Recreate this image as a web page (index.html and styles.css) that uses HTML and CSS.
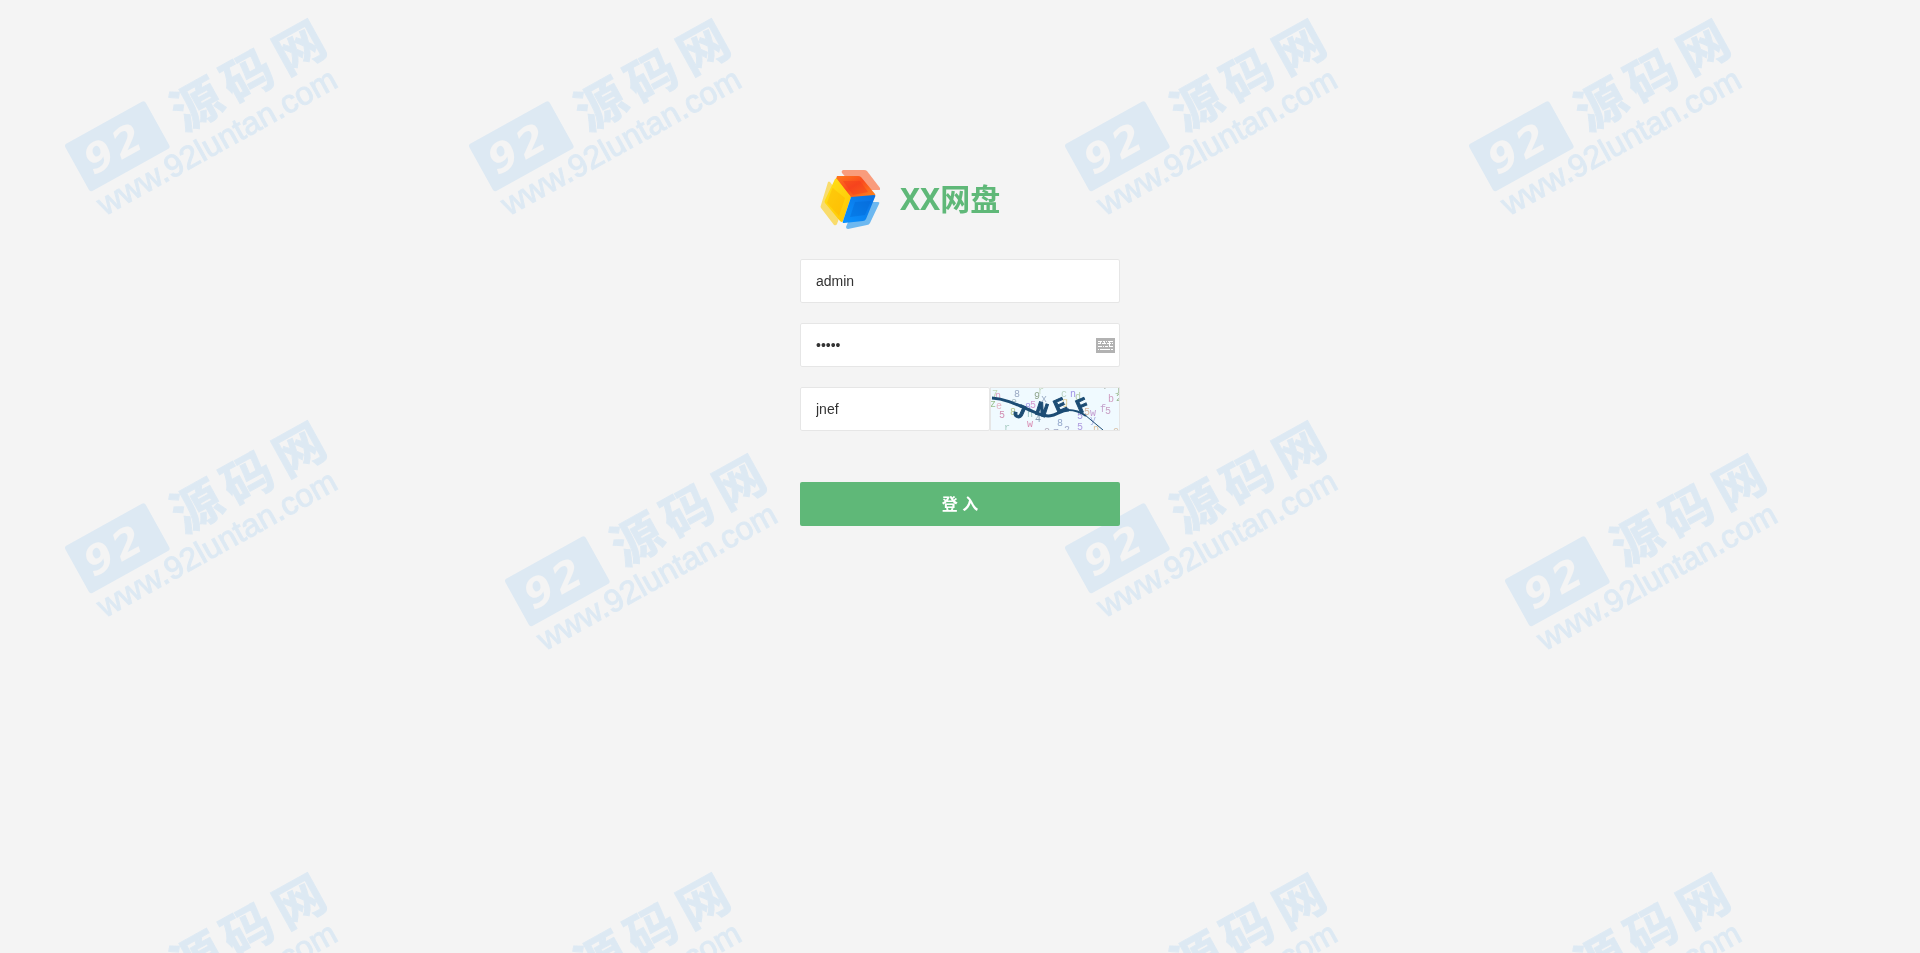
FILE: index.html
```
<!DOCTYPE html>
<html lang="zh-CN">
<head>
    <meta charset="UTF-8">
    <meta name="viewport" content="width=device-width, initial-scale=1.0">
    <title>XX网盘 - 登入</title>
    <link rel="stylesheet" href="styles.css">
</head>
<body>
    <!-- watermark -->
    <svg class="watermark" aria-hidden="true">
        <defs>
            <g id="mark" transform="translate(64 145) rotate(-29)">
                <rect class="mark-box" width="92" height="54" rx="3"/>
                <text class="mark-num" x="11 43" y="41">92</text>
                <text class="mark-name" x="111 169 228" y="47">源码网</text>
                <text class="mark-url" x="1" y="82">www.92luntan.com</text>
            </g>
            <pattern id="tile" width="1000" height="854" patternUnits="userSpaceOnUse">
                <use href="#mark"/>
                <use href="#mark" x="404"/>
                <use href="#mark" y="402"/>
                <use href="#mark" x="440" y="435"/>
            </pattern>
        </defs>
        <rect width="100%" height="100%" fill="url(#tile)"/>
    </svg>

    <div class="login">
        <div class="login-header">
            <svg class="logo" viewBox="0 0 60 60" aria-hidden="true">
                <defs>
                    <linearGradient id="red" x1="0" y1="0" x2="1" y2="1">
                        <stop offset="0" stop-color="#ff7a1c"/>
                        <stop offset=".45" stop-color="#fa4a1e"/>
                        <stop offset="1" stop-color="#ff8a1a"/>
                    </linearGradient>
                    <linearGradient id="yellow" x1="0" y1="0" x2="1" y2="1">
                        <stop offset="0" stop-color="#ffe21a"/>
                        <stop offset="1" stop-color="#ffc400"/>
                    </linearGradient>
                    <linearGradient id="blue" x1="1" y1="0" x2="0" y2="1">
                        <stop offset="0" stop-color="#0a6fe0"/>
                        <stop offset="1" stop-color="#0a93ff"/>
                    </linearGradient>
                </defs>
                <path fill="#f99c7c" d="M23 1h21q2 0 3 1l13 17q1 2-1 2H39q-2 0-3-1L22 4q-1-2 1-3z"/>
                <path fill="#f9dc6c" d="M8 13q1-1 2 0l15 20-8 22q-1 2-3 1L1 39q-1-1 0-3z"/>
                <path fill="#6db8f0" d="M36 33h22q2 0 1 2l-9 19q-1 2-3 2l-19 4q-2 0-2-2z"/>
                <path fill="url(#red)" d="M17 7h21q2 0 3 1l14 17q1 2-1 2l-23 2L16 10z"/>
                <path fill="#f23c1c" opacity=".45" d="M23 12h17l8 11-15 3z"/>
                <path fill="url(#yellow)" d="M15 10q1-1 2 0l14 18-8 24q-1 2-3 0L5 34q-1-1 0-3z"/>
                <path fill="#fdae00" opacity=".4" d="M12 20q1-2 2 0l11 9-6 18L7 34z"/>
                <path fill="url(#blue)" d="M31 28l23-2q2 0 1 2l-9 22q-1 2-3 2l-19 2q-2 0-1-2z"/>
                <path fill="#0062cf" opacity=".35" d="M35 33l16-1-6 14-15 2z"/>
            </svg>
            <h1>XX网盘</h1>
        </div>

        <form class="login-form">
            <div class="form-item">
                <input class="input" type="text" name="username" value="admin" aria-label="用户名">
            </div>
            <div class="form-item">
                <input class="input" type="password" name="password" value="admin" aria-label="密码">
                <svg class="keyboard" viewBox="0 0 19 15" aria-hidden="true">
                    <rect width="19" height="15" fill="#b2b2b2"/>
                    <path stroke="#fff" fill="none" d="M2 3.5h2m1 0h1m1 0h2m1 0h1m1 0h1m1 0h3M2 5.5h3m1 0h2m1 0h1m1 0h2m1 0h1m1 0h1M2 8.5h4m1 0h1m1 0h3m1 0h4M2 11.5h1m1 0h10m1 0h2M4.5 3v3m4-3v3m5-3v5"/>
                </svg>
            </div>
            <div class="form-item">
                <input class="input" type="text" name="code" value="jnef" aria-label="验证码">
                <svg class="captcha" viewBox="0 0 128 42" role="img" aria-label="验证码图片">
                    <g class="noise">
                        <text x="1" y="9" fill="#c3d9b4">7</text>
                        <text x="4" y="11" fill="#dda5c4">n</text>
                        <text x="-1" y="19" fill="#9bc08f">z</text>
                        <text x="5" y="21" fill="#e3b6c6">e</text>
                        <text x="8" y="30" fill="#d28fb4">5</text>
                        <text x="13" y="43" fill="#a9cdc4">r</text>
                        <text x="23" y="9" fill="#9aa9c4">8</text>
                        <text x="20" y="17" fill="#a6b8c2">e</text>
                        <text x="19" y="27" fill="#b9c98f">8</text>
                        <text x="43" y="11" fill="#8fa58c">9</text>
                        <text x="47" y="6" fill="#c5d8c0">r</text>
                        <text x="50" y="14" fill="#9fb0c8">x</text>
                        <text x="34" y="22" fill="#a99ce8">8</text>
                        <text x="39" y="20" fill="#d79ad0">5</text>
                        <text x="36" y="29" fill="#9cc4c4">h</text>
                        <text x="44" y="34" fill="#8ba2b8">4</text>
                        <text x="36" y="39" fill="#d98fb4">w</text>
                        <text x="70" y="9" fill="#b9d2c0">c</text>
                        <text x="79" y="9" fill="#a294e6">n</text>
                        <text x="84" y="12" fill="#b3c9a9">d</text>
                        <text x="71" y="17" fill="#e0cf9c">g</text>
                        <text x="66" y="38" fill="#94a8cc">8</text>
                        <text x="53" y="46" fill="#b0a8b8">e</text>
                        <text x="62" y="48" fill="#a0a8c4">7</text>
                        <text x="73" y="45" fill="#a0a9c9">2</text>
                        <text x="86" y="31" fill="#a294dc">5</text>
                        <text x="86" y="42" fill="#b09ce0">5</text>
                        <text x="93" y="27" fill="#d9b7a0">5</text>
                        <text x="99" y="28" fill="#c39cd0">w</text>
                        <text x="99" y="35" fill="#a8b0e0">y</text>
                        <text x="102" y="44" fill="#e0c4a0">p</text>
                        <text x="109" y="24" fill="#c4a0cc">f</text>
                        <text x="114" y="26" fill="#c8a0c4">5</text>
                        <text x="117" y="14" fill="#d09cc0">b</text>
                        <text x="125" y="13" fill="#98b890">2</text>
                        <text x="112" y="1" fill="#a0a8a0">r</text>
                        <text x="122" y="46" fill="#d8c0a8">o</text>
                        <text x="124" y="4" fill="#a8c4a0">j</text>
                    </g>
                    <path class="curve thick" d="M1 10C18 11 32 20 48 26S66 22 78 22"/>
                    <path class="curve" d="M77 22q10 0 18 6"/>
                    <path class="curve thin" d="M94 27L112 42"/>
                    <g class="code">
                        <text x="23" y="30" transform="rotate(24 29 23)">J</text>
                        <text x="45" y="28" transform="rotate(18 51 21)">N</text>
                        <text x="63" y="24" transform="rotate(-24 69 17)">E</text>
                        <text x="85" y="24" transform="rotate(-24 91 17)">F</text>
                    </g>
                </svg>
            </div>
            <button class="btn" type="button">登 入</button>
        </form>
    </div>
</body>
</html>
```
FILE: styles.css
```
* {
    box-sizing: border-box;
}
body {
    margin: 0;
    min-height: 100vh;
    background: #f4f4f4;
    font-family: "Liberation Sans", "Noto Sans CJK SC", sans-serif;
    font-size: 14px;
    color: #333;
}

/* watermark */
.watermark {
    position: fixed;
    top: 0;
    left: 0;
    width: 100%;
    height: 100%;
    z-index: -1;
}
.mark-box,
.mark-name,
.mark-url {
    fill: #dde9f3;
}
.mark-num {
    fill: #f4f4f4;
    font: italic bold 40px "DejaVu Sans", sans-serif;
}
.mark-name {
    font: bold 50px "Noto Sans CJK SC", sans-serif;
    stroke: #dde9f3;
    stroke-width: 1px;
}
.mark-url {
    font: 32px "Liberation Sans", sans-serif;
    stroke: #dde9f3;
    stroke-width: 1px;
}

/* login */
.login {
    width: 320px;
    max-width: 100%;
    margin: 0 auto;
    padding-top: 169px;
}
.login-header {
    display: flex;
    align-items: center;
    gap: 20px;
    height: 60px;
    padding-left: 20px;
    margin-bottom: 30px;
}
.logo {
    width: 60px;
    height: 60px;
}
.login-header h1 {
    margin: 0;
    font: bold 30px/40px "Noto Sans", "Noto Sans CJK SC", sans-serif;
    color: #5fb878;
}
.form-item {
    position: relative;
    display: flex;
    margin-bottom: 20px;
}
.input {
    flex: 1;
    min-width: 0;
    height: 44px;
    padding: 0 15px;
    border: 1px solid #e6e6e6;
    border-radius: 2px;
    outline: none;
    background: #fff;
    font: inherit;
    color: #333;
}
.keyboard {
    position: absolute;
    right: 5px;
    top: 15px;
    width: 19px;
    height: 15px;
}
.captcha {
    width: 130px;
    height: 44px;
    border: 1px solid #e6e6e6;
    background: #f0faff;
}
.noise {
    font: 10px "Liberation Mono", monospace;
}
.code {
    font: bold 20px "Liberation Mono", monospace;
    fill: #1c4c74;
    stroke: #1c4c74;
}
.curve {
    fill: none;
    stroke: #1c4c74;
    stroke-width: 2px;
}
.thick {
    stroke-width: 3px;
}
.thin {
    stroke-width: 1px;
}
.btn {
    width: 100%;
    height: 44px;
    margin-top: 31px;
    padding: 0 0 2px;
    border: none;
    border-radius: 2px;
    background: #5fb878;
    color: #fff;
    font: bold 16px "Liberation Sans", "Noto Sans CJK SC", sans-serif;
    cursor: pointer;
}
.btn:hover {
    opacity: .8;
}
```
